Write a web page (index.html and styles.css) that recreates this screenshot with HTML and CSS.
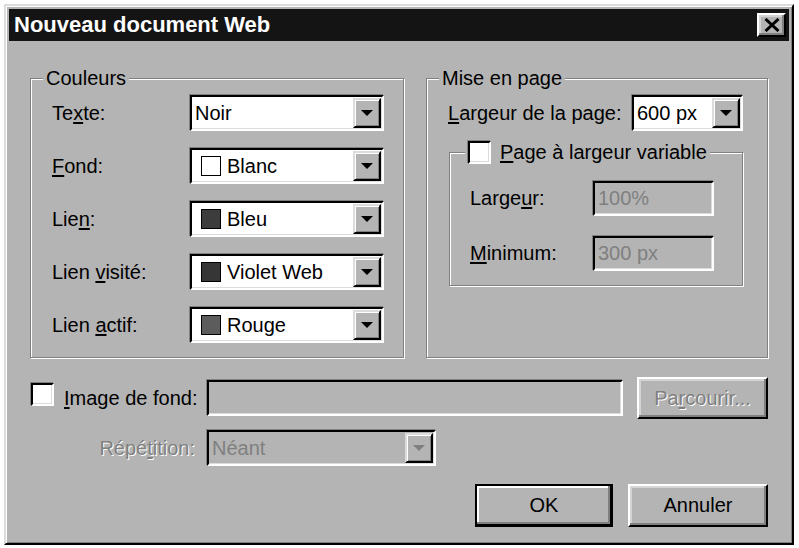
FILE: index.html
```html
<!DOCTYPE html>
<html lang="fr">
<head>
    <meta charset="UTF-8">
    <title>Nouveau document Web</title>
    <link rel="stylesheet" href="styles.css">
</head>
<body>
    <div class="dialog">
        <div class="titlebar">
            <span class="title">Nouveau document Web</span>
            <button class="close raised">
                <svg width="16" height="14" viewBox="0 0 16 14">
                    <path d="M1.5 1 L14.5 13 M14.5 1 L1.5 13" stroke="#000" stroke-width="3" fill="none"/>
                </svg>
            </button>
        </div>
        <div class="content">
            <div class="groups">
                <fieldset class="group outer colors">
                    <legend>Couleurs</legend>
                    <div class="rows">
                        <div class="row">
                            <label>Te<u>x</u>te:</label>
                            <div class="combo sunken"><span class="value">Noir</span><span class="drop"><i class="arrow"></i></span></div>
                        </div>
                        <div class="row">
                            <label><u>F</u>ond:</label>
                            <div class="combo sunken"><span class="value"><i class="swatch white"></i>Blanc</span><span class="drop"><i class="arrow"></i></span></div>
                        </div>
                        <div class="row">
                            <label>Lie<u>n</u>:</label>
                            <div class="combo sunken"><span class="value"><i class="swatch blue"></i>Bleu</span><span class="drop"><i class="arrow"></i></span></div>
                        </div>
                        <div class="row">
                            <label>Lien <u>v</u>isité:</label>
                            <div class="combo sunken"><span class="value"><i class="swatch violet"></i>Violet Web</span><span class="drop"><i class="arrow"></i></span></div>
                        </div>
                        <div class="row">
                            <label>Lien <u>a</u>ctif:</label>
                            <div class="combo sunken"><span class="value"><i class="swatch red"></i>Rouge</span><span class="drop"><i class="arrow"></i></span></div>
                        </div>
                    </div>
                </fieldset>
                <fieldset class="group outer layout">
                    <legend>Mise en page</legend>
                    <div class="row page-width">
                        <label><u>L</u>argeur de la page:</label>
                        <div class="combo sunken"><span class="value">600 px</span><span class="drop"><i class="arrow"></i></span></div>
                    </div>
                    <fieldset class="group variable">
                        <legend><span class="check sunken"></span><span><u>P</u>age à largeur variable</span></legend>
                        <div class="row">
                            <label>Large<u>u</u>r:</label>
                            <div class="field sunken disabled">100%</div>
                        </div>
                        <div class="row">
                            <label><u>M</u>inimum:</label>
                            <div class="field sunken disabled">300 px</div>
                        </div>
                    </fieldset>
                </fieldset>
            </div>

            <div class="image-row">
                <span class="check sunken"></span>
                <label class="image-label"><u>I</u>mage de fond:</label>
                <div class="field sunken disabled path"></div>
                <button class="raised browse"><span class="dim">Pa<u>r</u>courir...</span></button>
            </div>

            <div class="repeat-row">
                <label class="repeat-label dim">Répé<u>t</u>ition:</label>
                <div class="combo sunken disabled repeat"><span class="value">Néant</span><span class="drop"><i class="arrow"></i></span></div>
            </div>

            <div class="actions">
                <button class="raised ok">OK</button>
                <button class="raised cancel">Annuler</button>
            </div>
        </div>
    </div>
</body>
</html>
```

FILE: styles.css
```css
body {
    margin: 0;
    background-color: #fff;
    font-family: "Liberation Sans", Arial, sans-serif;
    font-size: 20px;
    color: #000;
}
u {
    text-decoration-thickness: 2px;
    text-underline-offset: 2px;
}
.dialog {
    margin: 4px 0 0 4px;
    width: 790px;
    height: 541px;
    box-sizing: border-box;
    background-color: #b4b4b4;
    border: 2px solid;
    border-color: #dcdcdc #000 #000 #dcdcdc;
    box-shadow: inset 1px 1px #fff, inset -1px -1px #808080;
    padding: 3px;
}
.titlebar {
    height: 32px;
    background-color: #141414;
    display: flex;
    align-items: center;
    justify-content: space-between;
    padding: 0 3px 0 5px;
}
.title {
    color: #fff;
    font-weight: bold;
    font-size: 22px;
}
.raised {
    box-sizing: border-box;
    background-color: #b4b4b4;
    border: 2px solid;
    border-color: #fff #000 #000 #fff;
    box-shadow: inset -2px -2px #808080, inset 2px 2px #d4d4d4;
    font-family: inherit;
    font-size: 20px;
    color: #000;
    padding: 0;
}
.sunken {
    box-sizing: border-box;
    border: 2px solid;
    border-color: #000 #fff #fff #000;
    box-shadow: -1px -1px #808080, inset -1px -1px #dcdcdc;
}
.close {
    width: 29px;
    height: 24px;
    display: flex;
    align-items: center;
    justify-content: center;
}
.content {
    padding: 27px 21px 0 21px;
}
.groups {
    display: flex;
    gap: 22px;
}
.group {
    margin: 0;
    padding: 0;
    min-width: 0;
    border: 1px solid #808080;
    box-shadow: inset 1px 1px #fff, 1px 1px #fff;
}
.group legend {
    margin-left: 12px;
    padding: 0 3px;
    line-height: 20px;
    background-color: #b4b4b4;
}
.outer {
    box-sizing: border-box;
    height: 290px;
    padding-top: 7px;
}
.colors {
    width: 374px;
}
.layout {
    width: 342px;
}
.rows {
    display: flex;
    flex-direction: column;
    gap: 17px;
}
.row {
    display: flex;
    align-items: center;
    height: 36px;
    padding-left: 21px;
}
.colors .row label {
    width: 138px;
}
.colors .combo {
    width: 194px;
}
.combo {
    height: 36px;
    display: flex;
    background-color: #fff;
    padding: 1px;
}
.value {
    flex: 1;
    display: flex;
    align-items: center;
    padding-left: 2px;
    white-space: nowrap;
}
.drop {
    width: 28px;
    box-sizing: border-box;
    background-color: #b4b4b4;
    border: 2px solid;
    border-color: #dcdcdc #000 #000 #dcdcdc;
    box-shadow: inset 1px 1px #fff, inset -1px -1px #808080;
    display: flex;
    align-items: center;
    justify-content: center;
}
.arrow {
    width: 0;
    height: 0;
    border-left: 6px solid transparent;
    border-right: 6px solid transparent;
    border-top: 6px solid #000;
}
.swatch {
    width: 20px;
    height: 20px;
    box-sizing: border-box;
    border: 1px solid #000;
    margin: 0 6px 0 6px;
}
.swatch.white { background-color: #fff; }
.swatch.blue { background-color: #3c3c3c; }
.swatch.violet { background-color: #363636; }
.swatch.red { background-color: #5c5c5c; }

.page-width label {
    width: 184px;
}
.page-width .combo {
    width: 111px;
}
.variable {
    margin: 10px 0 0 22px;
    width: 292px;
    padding: 17px 0 14px 0;
    display: flex;
    flex-direction: column;
    gap: 20px;
}
.variable legend {
    margin-left: 15px;
    display: flex;
    align-items: center;
    gap: 9px;
    line-height: 23px;
}
.variable .row {
    padding-left: 20px;
    height: 35px;
}
.variable .row label {
    width: 123px;
}
.check {
    width: 23px;
    height: 23px;
    background-color: #fff;
}
.field {
    height: 35px;
    width: 121px;
    display: flex;
    align-items: center;
    padding-left: 3px;
}
.disabled {
    background-color: #b4b4b4;
    color: #808080;
}
.dim {
    color: #808080;
    text-shadow: 1px 1px #fff;
}
.disabled .arrow {
    border-top-color: #808080;
}

.image-row {
    display: flex;
    align-items: center;
    height: 42px;
    margin-top: 19px;
}
.image-row .check {
    align-self: flex-start;
    margin: 6px 0 0 1px;
}
.image-label {
    width: 143px;
    margin-left: 10px;
}
.path {
    width: 416px;
    height: 36px;
}
.browse {
    width: 131px;
    height: 42px;
    margin-left: 14px;
}
.repeat-row {
    display: flex;
    align-items: center;
    margin-top: 11px;
}
.repeat-label {
    width: 165px;
    text-align: right;
    margin-right: 12px;
}
.repeat {
    width: 229px;
}
.actions {
    display: flex;
    justify-content: flex-end;
    gap: 15px;
    margin-top: 18px;
}
.actions button {
    height: 43px;
}
.ok {
    width: 138px;
    border-color: #000;
    box-shadow: inset -1px -1px #000, inset -3px -3px #808080, inset 2px 2px #fff;
}
.cancel {
    width: 140px;
}
```
